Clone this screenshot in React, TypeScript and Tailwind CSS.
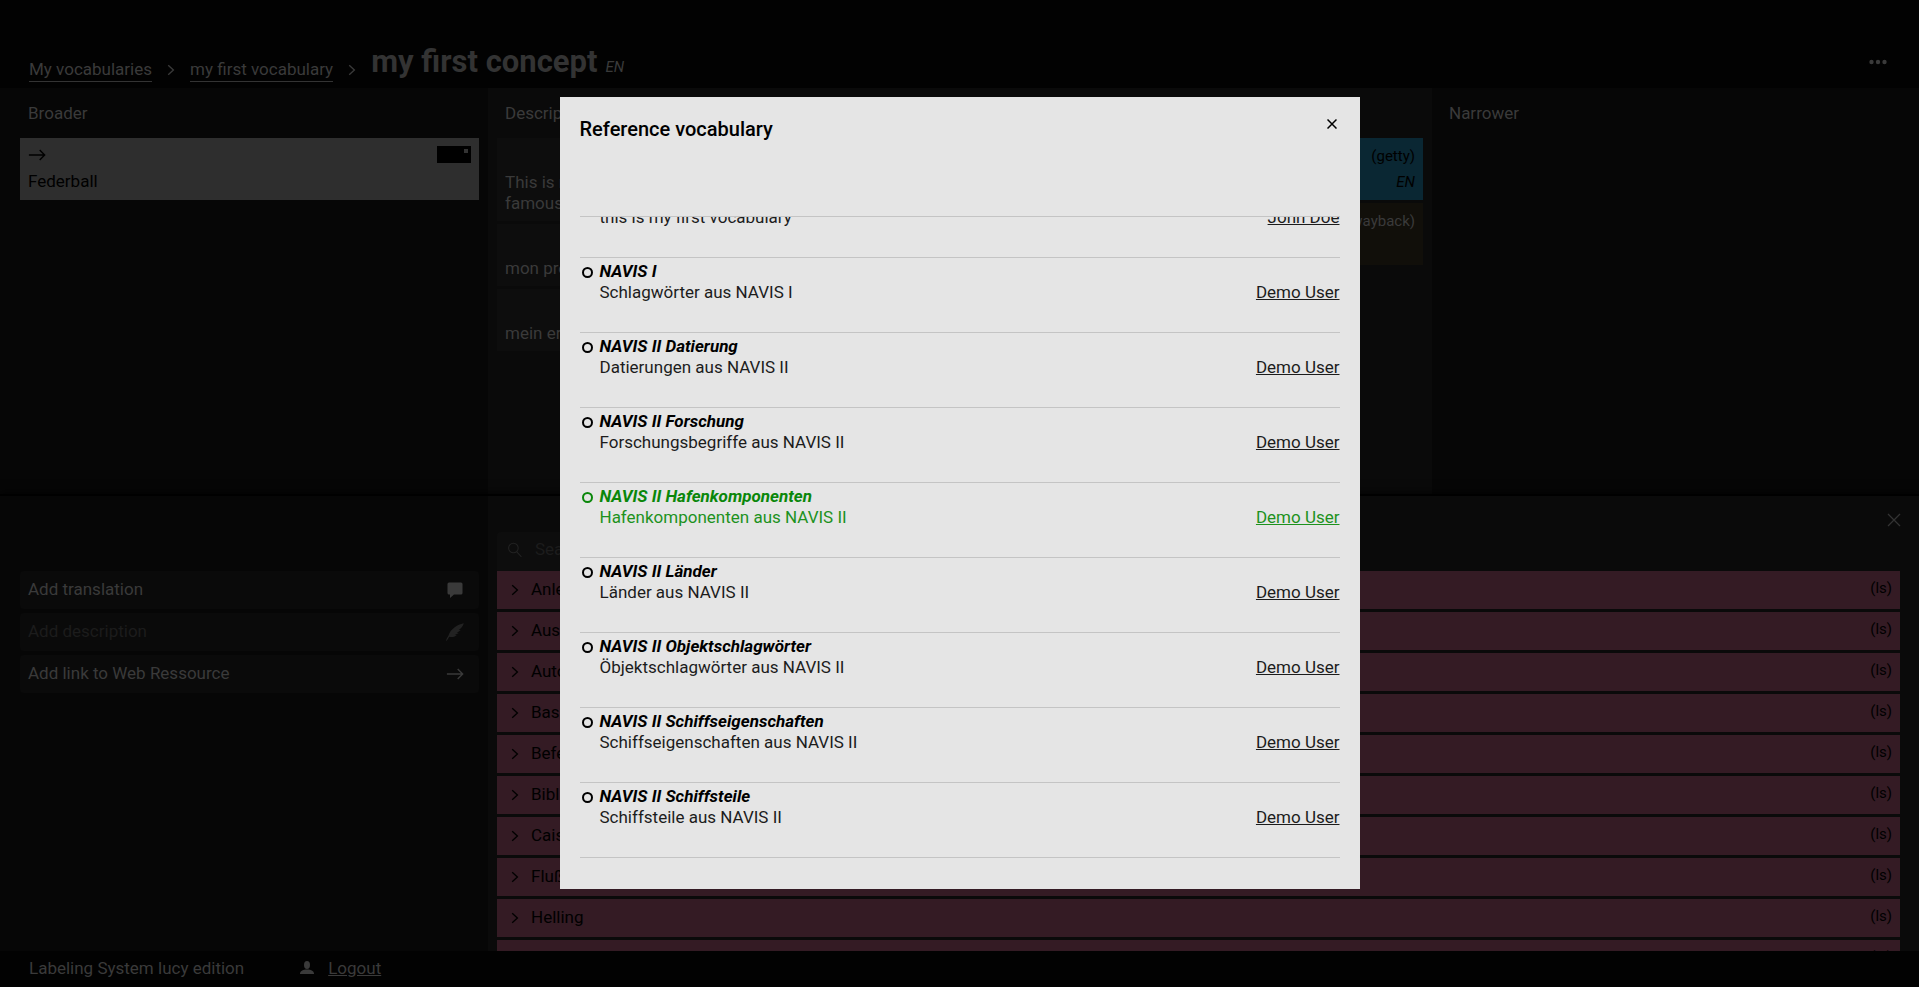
import type { ReactNode } from "react";

type Vocabulary = { title: string; description: string; owner: string; selected?: boolean };

const vocabularies: Vocabulary[] = [
  { title: "my first vocabulary", description: "this is my first vocabulary", owner: "John Doe" },
  { title: "NAVIS I", description: "Schlagwörter aus NAVIS I", owner: "Demo User" },
  { title: "NAVIS II Datierung", description: "Datierungen aus NAVIS II", owner: "Demo User" },
  { title: "NAVIS II Forschung", description: "Forschungsbegriffe aus NAVIS II", owner: "Demo User" },
  { title: "NAVIS II Hafenkomponenten", description: "Hafenkomponenten aus NAVIS II", owner: "Demo User", selected: true },
  { title: "NAVIS II Länder", description: "Länder aus NAVIS II", owner: "Demo User" },
  { title: "NAVIS II Objektschlagwörter", description: "Öbjektschlagwörter aus NAVIS II", owner: "Demo User" },
  { title: "NAVIS II Schiffseigenschaften", description: "Schiffseigenschaften aus NAVIS II", owner: "Demo User" },
  { title: "NAVIS II Schiffsteile", description: "Schiffsteile aus NAVIS II", owner: "Demo User" },
];

const concepts = ["Anleger", "Ausrüstung", "Autor", "Bassin", "Befestigung", "Bibliographie", "Caisson", "Flußhafen", "Helling", "Kai"];

function Icon({ className, children }: { className: string; children: ReactNode }) {
  return (
    <svg viewBox="0 0 20 20" className={className} fill="none" stroke="currentColor" strokeWidth="1.3" aria-hidden="true">
      {children}
    </svg>
  );
}

const Chevron = ({ className }: { className: string }) => (
  <Icon className={className}>
    <path d="M6.500 4l6.500 6-6.500 6" strokeWidth="1.7" />
  </Icon>
);

const Arrow = ({ className }: { className: string }) => (
  <Icon className={className}>
    <path d="M1 10h17.500M13 4.500l5.500 5.500-5.500 5.500" strokeWidth="1.6" />
  </Icon>
);

function ActionButton({ label, disabled, icon }: { label: string; disabled?: boolean; icon: ReactNode }) {
  return (
    <button
      disabled={disabled}
      className="flex h-[38px] items-center justify-between rounded-sm bg-[#0a0a0a] pr-[15px] pl-2 text-left text-[#3a3a3a] disabled:text-[#1c1c1c]"
    >
      {label}
      {icon}
    </button>
  );
}

function Header() {
  return (
    <header className="flex h-[88px] shrink-0 items-end justify-between bg-[#020202] pr-8 pb-1.5 pl-[29px] text-[#3a3a3a]">
      <nav className="flex items-end">
        <a href="#vocabularies" className="border-b border-[#333] leading-6">My vocabularies</a>
        <Chevron className="mx-[11px] mb-1 size-4" />
        <a href="#vocabulary" className="border-b border-[#333] leading-6">my first vocabulary</a>
        <Chevron className="mx-[11px] mb-1 size-4" />
        <div className="mb-0.5 flex items-baseline">
          <h1 className="text-[31px] leading-9 font-bold text-[#333]">my first concept</h1>
          <span className="ml-2 text-[15px] italic">EN</span>
        </div>
      </nav>
      <button aria-label="More options" className="mb-2.5">
        <svg viewBox="0 0 18 20" className="h-5 w-[18px]" fill="currentColor" aria-hidden="true">
          <circle cx="2.500" cy="10" r="2.200" />
          <circle cx="9" cy="10" r="2.200" />
          <circle cx="15.500" cy="10" r="2.200" />
        </svg>
      </button>
    </header>
  );
}

function ConceptColumns() {
  return (
    <div className="flex h-[408px] shrink-0 border-b-2 border-black text-[#3a3a3a]">
      <section className="w-[488px] shrink-0 bg-[#060606] pr-[9px] pl-5">
        <h2 className="flex h-[50px] items-center pt-0.5 pl-2">Broader</h2>
        <div className="h-[62px] bg-[#2e2e2e] px-2 pt-2 text-black">
          <div className="flex h-[17px] items-center justify-between">
            <Arrow className="size-[18px]" />
            <span className="flex h-[17px] w-[34px] justify-end bg-black pt-[3px] pr-[3px]">
              <span className="size-1 bg-[#333]" />
            </span>
          </div>
          <p className="mt-2 leading-[21px]">Federball</p>
        </div>
      </section>
      <section className="flex grow bg-[#0a0a0a] pr-[9px] pl-[9px]">
        <div className="flex w-1/2 flex-col gap-[3px]">
          <h2 className="-mb-[3px] flex h-[50px] items-center pt-0.5 pl-2">Description</h2>
          <p className="flex h-[83px] items-end bg-[#0d0d0d] px-2 pb-[7px] leading-[21px]">
            <span className="w-[160px]">This is my first famous concept</span>
          </p>
          <p className="flex h-[62px] items-end bg-[#0d0d0d] px-2 pb-[7px] leading-[21px]">mon premier concept</p>
          <p className="flex h-[62px] items-end bg-[#0d0d0d] px-2 pb-[7px] leading-[21px]">mein erstes Konzept</p>
        </div>
        <div className="flex w-1/2 flex-col gap-[3px] pt-[50px] pl-2">
          <div className="flex h-[62px] flex-col items-end justify-between bg-[#0a2733] px-2 py-2 text-[15px] leading-5 text-black">
            <span>(getty)</span>
            <span className="italic">EN</span>
          </div>
          <div className="flex h-[62px] flex-col items-end bg-[#110f0a] px-2 py-2 text-[15px] leading-5">
            <span>(wayback)</span>
          </div>
        </div>
      </section>
      <section className="w-[487px] shrink-0 bg-[#060606] pl-[17px]">
        <h2 className="flex h-[50px] items-center pt-0.5">Narrower</h2>
      </section>
    </div>
  );
}

function LowerPanel() {
  return (
    <div className="relative flex min-h-0 grow shadow-[0_-2px_10px_#000000]">
      <section className="flex w-[488px] shrink-0 flex-col gap-1 bg-[#060606] pt-[75px] pr-[9px] pl-5">
        <ActionButton
          label="Add translation"
          icon={
            <svg viewBox="0 0 18 18" className="size-[18px]" fill="currentColor" aria-hidden="true">
              <path d="M3 1.500h12a1.500 1.500 0 0 1 1.500 1.500v9a1.500 1.500 0 0 1-1.500 1.500H8L4 17v-3.500H3A1.500 1.500 0 0 1 1.500 12V3A1.500 1.500 0 0 1 3 1.500z" />
            </svg>
          }
        />
        <ActionButton
          label="Add description"
          disabled
          icon={
            <svg viewBox="0 0 18 18" className="size-[18px] text-[#222]" fill="currentColor" aria-hidden="true">
              <path d="M17.800.2C11 1.500 4.500 6 2.500 12.500.9 15 .4 16.500 0 17.700l.8.100 2.500-4c3 .5 6 0 7.500-1.600l-2-.3 4-1.900-2-.3 4-2.500-2-.1C15.500 5 17 3 17.800.2z" />
            </svg>
          }
        />
        <ActionButton label="Add link to Web Ressource" icon={<Arrow className="size-[18px]" />} />
      </section>
      <section className="flex min-w-0 grow flex-col bg-[#0a0a0a] pr-[19px] pl-[9px]">
        <div className="flex h-9 shrink-0 items-end justify-end text-[#333]">
          <button aria-label="Close panel" className="-mr-1 pb-0.5">
            <Icon className="size-5">
              <path d="M4 4l12 12M16 4L4 16" />
            </Icon>
          </button>
        </div>
        <label className="flex h-[39px] w-[460px] shrink-0 items-center gap-3 rounded-t-sm bg-[#0d0d0d] pb-1 pl-2.5 text-[#222]">
          <Icon className="size-4">
            <circle cx="8" cy="7.500" r="6" />
            <path d="M12 12l6 6.500" />
          </Icon>
          <input aria-label="Search" placeholder="Search" className="min-w-0 grow bg-transparent outline-none placeholder:text-[#1c1c1c]" />
        </label>
        <ul className="flex min-h-0 grow flex-col gap-[3px] overflow-hidden text-black">
          {concepts.map((name) => (
            <li key={name} className="flex h-[38px] shrink-0 items-center bg-[#341b24] pr-2 pl-2.5">
              <Chevron className="mr-2 size-4" />
              <span className="grow">{name}</span>
              <span className="pb-1 text-[15px]">(ls)</span>
            </li>
          ))}
        </ul>
      </section>
    </div>
  );
}

function VocabularyDialog() {
  return (
    <div className="fixed inset-0 flex items-center justify-center pb-px">
      <div
        role="dialog"
        aria-labelledby="dialog-title"
        className="flex h-[792px] w-[800px] flex-col bg-[#e5e5e5] px-5 pb-[31px] text-black"
      >
        <div className="flex h-[119px] shrink-0 items-start justify-between pt-[18px]">
          <h2 id="dialog-title" className="text-[20px] leading-7 font-medium">Reference vocabulary</h2>
          <button aria-label="Close" className="pt-1 pr-[3px]">
            <svg viewBox="0 0 20 20" className="size-2.5" fill="none" stroke="currentColor" strokeWidth="3" aria-hidden="true">
              <path d="M1 1l18 18M19 1L1 19" />
            </svg>
          </button>
        </div>
        <ul className="flex min-h-0 grow flex-col justify-end overflow-hidden border-t border-[#c4c4c4]">
          {vocabularies.map((v) => (
            <li
              key={v.description}
              className={`flex h-[75px] shrink-0 border-b border-[#c4c4c4] pt-[3px] leading-[21px] ${v.selected ? "text-[#0a870a]" : "text-black"}`}
            >
              <span className="w-5 shrink-0 pt-1.5 pl-0.5">
                <input type="radio" name="vocabulary" aria-label={v.title} className="block size-[11px] appearance-none rounded-full border-2 border-current" />
              </span>
              <div className="grow">
                <h3 className="font-bold italic">{v.title}</h3>
                <div className={`flex justify-between ${v.selected ? "text-[#1d921d]" : "text-[#1c1c1c]"}`}>
                  <p>{v.description}</p>
                  <a href="#owner" className="underline">{v.owner}</a>
                </div>
              </div>
            </li>
          ))}
        </ul>
      </div>
    </div>
  );
}

export default function App() {
  return (
    <div className="flex h-screen flex-col overflow-hidden bg-[#060606] font-['Roboto',sans-serif] text-[17px]">
      <Header />
      <ConceptColumns />
      <LowerPanel />
      <footer className="relative flex h-9 shrink-0 items-center bg-[#020202] pl-[29px] text-[#3a3a3a]">
        <span>Labeling System lucy edition</span>
        <svg viewBox="0 0 14 13" className="mr-3.5 mb-1 ml-14 h-[13px] w-3.5" fill="currentColor" aria-hidden="true">
          <ellipse cx="7" cy="4" rx="3" ry="4" />
          <path d="M0 13c0-3 2-3.800 5.500-4.500h3C12 9.200 14 10 14 13z" />
        </svg>
        <a href="#logout" className="underline">Logout</a>
      </footer>
      <VocabularyDialog />
    </div>
  );
}
